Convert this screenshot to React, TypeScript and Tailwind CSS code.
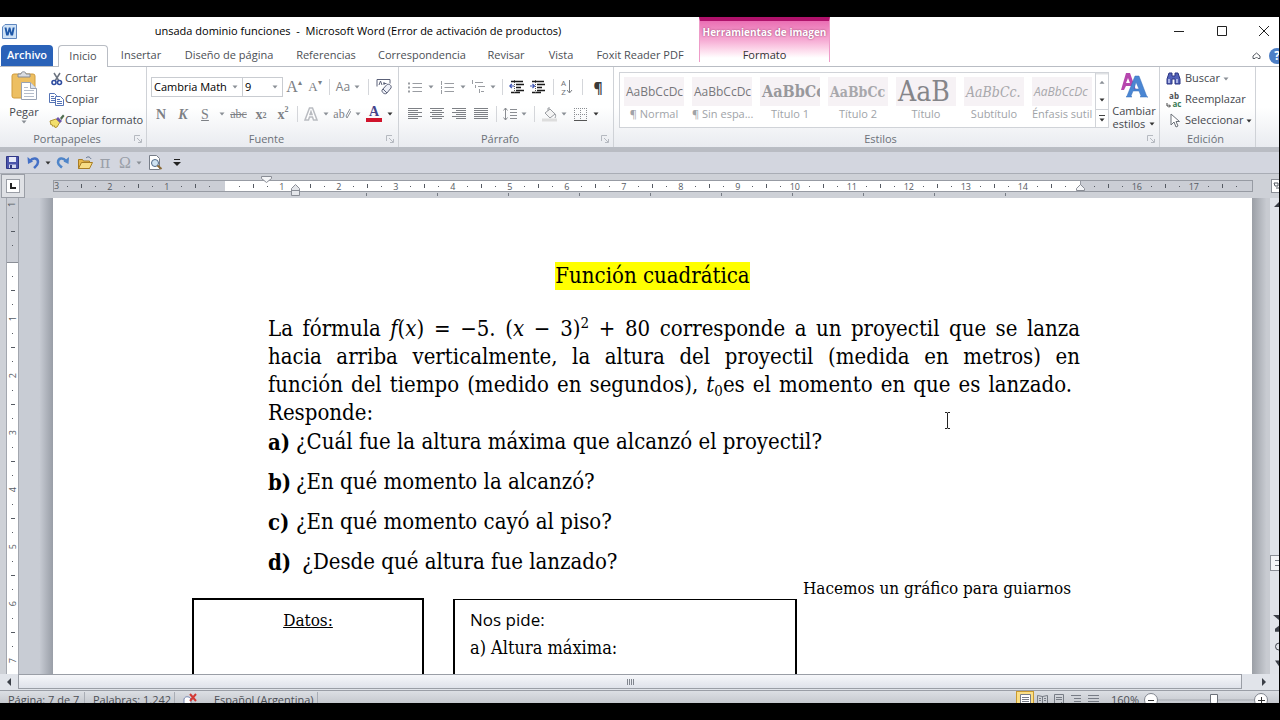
import type { ReactNode } from 'react';

const UI = "font-['Open_Sans','Noto_Sans',sans-serif]";
const SERIF = "font-['Liberation_Serif',serif]";

function Caret({ dark = false }: { dark?: boolean }) {
  return (
    <svg width="6" height="4" viewBox="0 0 6 4" className={dark ? 'fill-[#333333]' : 'fill-[#8a8f96]'}>
      <path d="M0.5 0.5h5L3 3.5z" />
    </svg>
  );
}

function Tool({ label, className, children }: { label: string; className: string; children: ReactNode }) {
  return (
    <button aria-label={label} className={`flex h-6 shrink-0 items-center justify-center ${className}`}>
      {children}
    </button>
  );
}

function Sep({ className }: { className: string }) {
  return (
    <span className={`flex h-6 shrink-0 items-center justify-center ${className}`}>
      <span className="h-4 w-px bg-[#d4d6da]" />
    </span>
  );
}

function Group({ title, className, launcher = true, children }: { title: string; className: string; launcher?: boolean; children: ReactNode }) {
  return (
    <section className={`flex flex-col border-r border-[#cfd2d7] ${className}`}>
      <div className="flex-1">{children}</div>
      <div className="flex h-4 items-center pr-1 text-[11px] text-[#6b7078]">
        <h2 className="flex-1 text-center">{title}</h2>
        {launcher && (
          <button aria-label={`Opciones de ${title}`} className="w-2">
            <svg width="8" height="8" viewBox="0 0 8 8" fill="none" stroke="#b5b9c0">
              <path d="M0.5 6V0.5H6M3 3l4 4M7.5 4v3.5H4" />
            </svg>
          </button>
        )}
      </div>
    </section>
  );
}

function Lines({ rows }: { rows: [number, number][] }) {
  return (
    <svg width="14" height="12" viewBox="0 0 14 12" stroke="#7d8085" strokeWidth="1">
      {rows.map(([x1, x2], i) => (
        <path key={i} d={`M${x1} ${i * 2 + 0.5}H${x2}`} />
      ))}
    </svg>
  );
}

function IndentIcon({ flip = false }: { flip?: boolean }) {
  return (
    <svg width="16" height="14" viewBox="0 0 16 14" fill="none">
      <path d="M2 1.5h12M7 4.5h8M7 7.5h5M7 10.5h8M2 12.5h9" stroke="#1b1b1b" strokeWidth="1.4" />
      <path d="M5.5 0v14" stroke="#555555" strokeDasharray="1 1" />
      <path d={flip ? 'M0 6h4M2.5 4l2 2-2 2' : 'M5 6H1M2.8 4l-2 2 2 2'} stroke="#3d55b5" strokeWidth="1.2" />
    </svg>
  );
}

function WordLogo() {
  return (
    <svg width="15" height="15" viewBox="0 0 15 15">
      <path d="M3 .5h11.500v14H.5V3z" fill="#cfe2f6" stroke="#5f87bf" />
      <path d="M2.500 3.500h2l1 5 1.300-5h1.600l1.300 5 1-5h2L11 11.500H8.700L7.600 7.500l-1.100 4H4.200z" fill="#1f58a8" />
    </svg>
  );
}

function PasteIcon() {
  return (
    <svg width="27" height="29" viewBox="0 0 27 29">
      <rect x="1" y="3" width="23" height="24" rx="2" fill="#edbf62" stroke="#d19c3c" />
      <path d="M7 6V3h3c0-3 5-3 5 0h4v3z" fill="#d9dce1" stroke="#858a92" />
      <path d="M10.500 11.500h9l6 6v11h-15z" fill="#fff" stroke="#98a2b4" />
      <path d="M19.500 11.500v6h6" fill="#dbe2ee" stroke="#98a2b4" />
      <path d="M13 16.500h4M13 19.500h10M13 22.500h10M13 25.500h10" stroke="#b5bdcb" />
    </svg>
  );
}

function CutIcon() {
  return (
    <svg width="14" height="14" viewBox="0 0 14 14" fill="none">
      <path d="M4 1l5 8M10 1L5 9" stroke="#6c7480" strokeWidth="1.500" />
      <circle cx="4" cy="10.500" r="2" stroke="#2f4da0" strokeWidth="1.600" />
      <circle cx="9.500" cy="10.500" r="2" stroke="#2f4da0" strokeWidth="1.600" />
    </svg>
  );
}

function CopyIcon() {
  return (
    <svg width="15" height="13" viewBox="0 0 15 13" fill="#fff" stroke="#5573b5">
      <path d="M.5.5h5l2 2v7h-7z" />
      <path d="M2 3.500h3M2 5.500h4M2 7.500h4" />
      <path d="M6.500 3.500h5l3 3v6h-8z" />
      <path d="M8 6.500h3M8 8.500h5M8 10.500h5" />
    </svg>
  );
}

function BrushIcon() {
  return (
    <svg width="16" height="14" viewBox="0 0 16 14">
      <path d="M1 7l6-2 4 3-3 5-2 .5-1-2-1 1-1-2-1 .5z" fill="#f3df6b" stroke="#b39531" />
      <path d="M7 5l2-2 4 4-2 2z" fill="#6b55a8" />
      <path d="M11 4l3-3.500 1.500 1.500L12.500 6z" fill="#4d6a4d" />
    </svg>
  );
}

function BinocularsIcon() {
  return (
    <svg width="15" height="13" viewBox="0 0 15 13">
      <path d="M3 1h3v3h3V1h3l2 6v5H9V7H6v5H1V7z" fill="#5261b8" stroke="#2c3683" />
      <path d="M3 7v4M11 7v4" stroke="#c5cdf2" strokeWidth="1.500" />
    </svg>
  );
}

function ReplaceIcon() {
  return (
    <span className="relative flex w-4 flex-col text-[8px] leading-[8px] font-bold">
      <span className="text-[#4c4f55]">ab</span>
      <span className="pl-1.5 text-[#3a7d57]">ac</span>
      <svg width="5" height="5" viewBox="0 0 5 5" className="absolute bottom-0 left-0" fill="none" stroke="#444">
        <path d="M1 0v3h3M3 1.500L4.500 3 3 4.500" />
      </svg>
    </span>
  );
}

function SelectIcon() {
  return (
    <svg width="11" height="15" viewBox="0 0 11 15">
      <path d="M2 1v11l3-3 2 5 2-1-2-4.500h3.500z" fill="#fff" stroke="#6b7078" />
    </svg>
  );
}

function QatIcon({ name }: { name: 'save' | 'undo' | 'redo' | 'open' | 'preview' }) {
  return (
    <svg width="16" height="15" viewBox="0 0 16 15" fill="none">
      {name === 'save' && (
        <>
          <path d="M1.500 1.500h12v12h-12z" fill="#4b54ab" stroke="#2f3787" />
          <path d="M4 2h7v5H4z" fill="#e6e9f8" />
          <path d="M4 9.500h7V13H4z" fill="#d2d6ee" />
          <path d="M5 10h2v3H5z" fill="#30387e" />
        </>
      )}
      {name === 'undo' && (
        <>
          <path d="M4 6c3-4 8-3 8 1 0 3-2 4-4 6" stroke="#4470c6" strokeWidth="2.500" />
          <path d="M1.500 2l.5 7 5-2.500z" fill="#4470c6" />
        </>
      )}
      {name === 'redo' && (
        <>
          <path d="M11 6C8 2 3 3 3 7.500c0 2.500 2 3.500 4 5" stroke="#4f85c9" strokeWidth="2.500" />
          <path d="M14 2l-.5 7-5-2.500z" fill="#4f85c9" />
        </>
      )}
      {name === 'open' && (
        <>
          <path d="M1.500 13.500v-9h4l1 1.500h6v7.500z" fill="#e9b84a" stroke="#a97e25" />
          <path d="M1.500 13.500l3-6h11l-3 6z" fill="#f8dd85" stroke="#a97e25" />
          <path d="M9 3c2-2 4-1 5 1" stroke="#5e6f8a" />
        </>
      )}
      {name === 'preview' && (
        <>
          <path d="M2.500.5h7l3 3v11h-10z" fill="#fff" stroke="#777d88" />
          <circle cx="8" cy="8" r="3.500" fill="#cfe3f2" stroke="#4f6785" />
          <path d="M10.500 10.500l4 3.500" stroke="#8a6a36" strokeWidth="2" />
        </>
      )}
    </svg>
  );
}

const styles = [
  { name: '¶ Normal', sample: 'AaBbCcDc', look: "text-[12px] text-[#77777b] font-['Open_Sans',sans-serif]" },
  { name: '¶ Sin espa...', sample: 'AaBbCcDc', look: "text-[12px] text-[#77777b] font-['Open_Sans',sans-serif]" },
  { name: 'Título 1', sample: 'AaBbCc', look: "text-[16px] font-bold text-[#98989c] font-['DejaVu_Serif_Condensed','DejaVu_Serif',serif]" },
  { name: 'Título 2', sample: 'AaBbCc', look: "text-[14px] font-bold text-[#a8a8ac] font-['DejaVu_Serif_Condensed','DejaVu_Serif',serif]" },
  { name: 'Título', sample: 'AaB', look: "text-[28px] text-[#858589] font-['DejaVu_Serif_Condensed','DejaVu_Serif',serif]" },
  { name: 'Subtítulo', sample: 'AaBbCc.', look: "text-[14px] italic text-[#a8a8ac] font-['DejaVu_Serif_Condensed','DejaVu_Serif',serif]" },
  { name: 'Énfasis sutil', sample: 'AaBbCcDc', look: "text-[12px] italic text-[#a8a8ac] font-['Open_Sans',sans-serif]" },
];

const tabs = [
  { name: 'Insertar', width: 'w-[66px]' },
  { name: 'Diseño de página', width: 'w-[110px]' },
  { name: 'Referencias', width: 'w-[84px]' },
  { name: 'Correspondencia', width: 'w-[108px]' },
  { name: 'Revisar', width: 'w-[60px]' },
  { name: 'Vista', width: 'w-[50px]' },
  { name: 'Foxit Reader PDF', width: 'w-[108px]' },
];

function Header() {
  return (
    <header className="flex shrink-0 bg-white text-[11px] text-[#4c4f55]">
      <div className="flex w-[699px] shrink-0 flex-col">
        <div className="flex h-7 items-center pl-0.5 text-black">
          <WordLogo />
          <h1 className="flex-1 text-center whitespace-pre">unsada dominio funciones  -  Microsoft Word (Error de activación de productos)</h1>
        </div>
        <nav className="flex h-[21px] items-stretch pl-px">
          <button className="w-[52px] rounded-t-sm bg-[#2a62b8] font-semibold text-white">Archivo</button>
          <button className="z-10 -mb-px ml-[5px] w-[50px] rounded-t-sm border border-b-0 border-[#b9bdc4] bg-white">Inicio</button>
          {tabs.map((tab) => (
            <button key={tab.name} className={`${tab.width} whitespace-nowrap`}>{tab.name}</button>
          ))}
        </nav>
      </div>
      <div className="flex h-[45px] w-[131px] shrink-0 flex-col border-x border-[#ee9cc9] border-t-4 border-t-[#b0126b] bg-linear-to-b from-[#ea6fb4] via-[#f5a8d2] via-45% to-white to-90% text-center">
        <span className="h-[27px] pt-[3px] text-[10px] leading-4 font-bold whitespace-nowrap text-white [text-shadow:0_0_2px_#8a3565]">Herramientas de imagen</span>
        <button className="leading-[14px] text-[#333333]">Formato</button>
      </div>
      <div className="flex min-w-0 flex-1 flex-col overflow-hidden">
        <div className="flex h-7 items-center justify-end">
          <button aria-label="Minimizar" className="flex w-[42px] justify-center">
            <svg width="10" height="10" stroke="#222222"><path d="M0 5.500h10" /></svg>
          </button>
          <button aria-label="Maximizar" className="flex w-[44px] justify-center">
            <svg width="10" height="10" fill="none" stroke="#222222"><path d="M.5.5h9v9h-9z" /></svg>
          </button>
          <button aria-label="Cerrar" className="mr-1 flex w-[31px] justify-end pr-1.5">
            <svg width="10" height="10" stroke="#222222"><path d="M0 0l10 10M10 0L0 10" /></svg>
          </button>
        </div>
        <div className="-mr-1.5 flex h-[21px] items-center justify-end gap-2">
          <button aria-label="Minimizar la cinta">
            <svg width="9" height="8" viewBox="0 0 9 8" fill="none" stroke="#555a62"><path d="M1 4l3.500-3L8 4v2.500H6L4.500 5 3 6.500H1z" /></svg>
          </button>
          <button aria-label="Ayuda" className="size-4 rounded-full bg-[#4d7fc6] text-[12px] leading-4 font-bold text-white">?</button>
        </div>
      </div>
    </header>
  );
}

function Clipboard() {
  return (
    <div className="flex pl-1 text-[11px] text-[#44474d]">
      <button className="flex w-10 flex-col items-center pt-1 leading-4">
        <PasteIcon />
        <span className="mt-1">Pegar</span>
        <Caret />
      </button>
      <div className="flex flex-col pt-px pl-1">
        <button className="flex h-[21px] items-center"><span className="flex w-[17px] justify-center"><CutIcon /></span>Cortar</button>
        <button className="flex h-[21px] items-center"><span className="flex w-[17px] justify-center"><CopyIcon /></span>Copiar</button>
        <button className="flex h-[21px] items-center whitespace-nowrap"><span className="flex w-[17px] justify-center"><BrushIcon /></span>Copiar formato</button>
      </div>
    </div>
  );
}

function Combo({ label, value, className }: { label: string; value: string; className: string }) {
  return (
    <span className={`relative block h-5 border border-[#c9ccd1] bg-white ${className}`}>
      <select aria-label={label} className="block h-[18px] w-full appearance-none pl-0.5 text-[11px] leading-[18px] text-black outline-none">
        <option>{value}</option>
      </select>
      <span className="pointer-events-none absolute top-[7px] right-1 flex"><Caret /></span>
    </span>
  );
}

function FontGroup() {
  return (
    <div className="flex flex-col gap-[3px] pt-2 pl-1 text-[#7d8085]">
      <div className="flex items-center">
        <Combo label="Fuente" value="Cambria Math" className="w-[92px]" />
        <Combo label="Tamaño" value="9" className="-ml-px w-[41px]" />
        <Tool label="Agrandar fuente" className={`${SERIF} w-[22px] text-[16px]`}>A<sup className="text-[8px]">▴</sup></Tool>
        <Tool label="Encoger fuente" className={`${SERIF} w-5 text-[13px]`}>A<sup className="text-[8px]">▾</sup></Tool>
        <Sep className="w-2" />
        <Tool label="Cambiar mayúsculas" className="w-5 text-[12px]">Aa</Tool>
        <Tool label="Más mayúsculas" className="w-2"><Caret /></Tool>
        <Sep className="w-3.5" />
        <Tool label="Borrar formato" className="w-[18px]">
          <svg width="17" height="16" viewBox="0 0 17 16" fill="none" stroke="#5b6178">
            <path d="M1 7.500V.5h13v4M3 6l1.500-4L6 6M7.500 4.500h3M8 6V3" />
            <path d="M6 11l5-5.500c2-1 5 1 4 3.500l-4.500 5.500c-2 1-5-1-4.500-3.500zM7 10l4 4" fill="#eef0f8" />
          </svg>
        </Tool>
      </div>
      <div className={`${SERIF} -ml-px flex items-center text-[14px]`}>
        <Tool label="Negrita" className="w-[22px] font-bold">N</Tool>
        <Tool label="Cursiva" className="w-[22px] font-bold italic">K</Tool>
        <Tool label="Subrayado" className="w-[22px] underline">S</Tool>
        <Tool label="Más subrayados" className="w-[11px]"><Caret /></Tool>
        <Tool label="Tachado" className="w-[23px] text-[12px] line-through">abc</Tool>
        <Tool label="Subíndice" className="w-[22px] font-bold">x<sub className="text-[8px]">2</sub></Tool>
        <Tool label="Superíndice" className="w-[22px] font-bold">x<sup className="text-[8px]">2</sup></Tool>
        <Sep className="w-1.5" />
        <Tool label="Efectos de texto" className="w-[22px]">
          <svg width="14" height="14" viewBox="0 0 14 14" fill="#fff" stroke="#b9bcc1" strokeWidth="1.500">
            <path d="M5.500 1h3l4.500 12H9.500L8.500 10h-3l-1 3H1zM6 7.500h2L7 4.500z" />
          </svg>
        </Tool>
        <Tool label="Más efectos" className="w-2"><Caret /></Tool>
        <Tool label="Resaltado" className="w-6 text-[12px]">
          ab
          <svg width="6" height="10" viewBox="0 0 6 10" fill="none" stroke="#8a8f96"><path d="M5 0L1 7l1 2 4-7" /></svg>
        </Tool>
        <Tool label="Más resaltados" className="w-2"><Caret /></Tool>
        <Tool label="Color de fuente" className="w-6">
          <span className="flex w-4 flex-col items-center border-b-4 border-[#d0142c] text-[14px] leading-3 font-bold text-[#45458c]">A</span>
        </Tool>
        <Tool label="Más colores" className="w-2"><Caret dark /></Tool>
      </div>
    </div>
  );
}

function ListIcon({ numbered = false }: { numbered?: boolean }) {
  return (
    <svg width="14" height="13" viewBox="0 0 14 13" stroke="#9a9da2">
      <path d="M4.500 2.500H14M4.500 6.500H14M4.500 10.500H14" />
      <path d={numbered ? 'M1.500 0v4M1.500 5v3M1.500 9v4' : 'M0 2.500h2M0 6.500h2M0 10.500h2'} strokeWidth={numbered ? 1 : 2} />
    </svg>
  );
}

function ParagraphGroup() {
  return (
    <div className="flex flex-col gap-[3px] pt-2 pl-1 text-[#6d7076]">
      <div className="flex items-center">
        <Tool label="Viñetas" className="w-6"><ListIcon /></Tool>
        <Tool label="Más viñetas" className="w-2"><Caret /></Tool>
        <Tool label="Numeración" className="w-6"><ListIcon numbered /></Tool>
        <Tool label="Más numeración" className="w-2"><Caret /></Tool>
        <Tool label="Lista multinivel" className="w-[22px]">
          <svg width="15" height="14" viewBox="0 0 15 14" stroke="#9a9da2">
            <path d="M1.500 0v4M4 2.500h8M4.500 5v3M7 6.500h7M8.500 9v4M10 11.500h3" />
          </svg>
        </Tool>
        <Tool label="Más listas" className="w-2"><Caret /></Tool>
        <Sep className="w-2.5" />
        <Tool label="Disminuir sangría" className="w-5"><IndentIcon /></Tool>
        <Tool label="Aumentar sangría" className="w-[22px]"><IndentIcon flip /></Tool>
        <Sep className="w-2" />
        <Tool label="Ordenar" className="w-5">
          <span className="flex flex-col text-[8px] leading-[9px]"><span>A</span><span>Z</span></span>
          <svg width="7" height="14" viewBox="0 0 7 14" fill="none" stroke="#7d8085"><path d="M3.500 0v13M1 10l2.500 3L6 10" /></svg>
        </Tool>
        <Sep className="w-2.5" />
        <Tool label="Mostrar todo" className="w-[22px] text-[14px] font-bold text-[#3a3a3a]">¶</Tool>
      </div>
      <div className="flex items-center pl-px">
        <Tool label="Alinear a la izquierda" className="w-[22px]"><Lines rows={[[0, 14], [0, 10], [0, 14], [0, 10], [0, 14], [0, 10]]} /></Tool>
        <Tool label="Centrar" className="w-[22px]"><Lines rows={[[0, 14], [2, 12], [0, 14], [2, 12], [0, 14], [2, 12]]} /></Tool>
        <Tool label="Alinear a la derecha" className="w-[22px]"><Lines rows={[[0, 14], [4, 14], [0, 14], [4, 14], [0, 14], [4, 14]]} /></Tool>
        <Tool label="Justificar" className="w-[22px]"><Lines rows={[[0, 14], [0, 14], [0, 14], [0, 14], [0, 14], [0, 14]]} /></Tool>
        <Sep className="w-2" />
        <Tool label="Interlineado" className="w-5">
          <svg width="14" height="14" viewBox="0 0 14 14" fill="none" stroke="#8a8d92">
            <path d="M2.500 1v12M.5 3.500l2-2.500 2 2.500M.5 10.500l2 2.500 2-2.500M7 2.500h7M7 5.500h7M7 8.500h7M7 11.500h7" />
          </svg>
        </Tool>
        <Tool label="Más interlineado" className="w-2"><Caret /></Tool>
        <Sep className="w-3" />
        <Tool label="Sombreado" className="w-5">
          <svg width="16" height="15" viewBox="0 0 16 15" fill="#f4f4f4" stroke="#9a9da2">
            <path d="M3 6l5-4 5 5-5 4zM6 4V1h2M12 6c2 1 2 3 1 5" />
            <path d="M0 13h15" stroke="#dddddd" strokeWidth="3" />
          </svg>
        </Tool>
        <Tool label="Más sombreado" className="w-2"><Caret /></Tool>
        <Tool label="Bordes" className="w-6">
          <svg width="13" height="13" viewBox="0 0 13 13" fill="none" stroke="#8a8d92">
            <path d="M.5 0v12M6.500 0v12M12.500 0v12M0 .5h13M0 6.500h13" strokeDasharray="1 1" />
            <path d="M0 12.500h13" stroke="#555555" />
          </svg>
        </Tool>
        <Tool label="Más bordes" className="w-2"><Caret dark /></Tool>
      </div>
    </div>
  );
}

function StylesGroup() {
  return (
    <div className="flex pt-[5px] pl-[5px] text-[11px]">
      <div className="flex h-14 min-w-0 flex-1 border border-[#d0d3d8] bg-white">
        <div className="flex min-w-0 flex-1 gap-2 overflow-hidden pt-1 pl-1">
          {styles.map((style) => (
            <button key={style.name} className="flex w-[60px] shrink-0 flex-col">
              <span className={`flex h-[29px] w-[60px] items-center overflow-hidden bg-[#f6f2f5] pl-0.5 leading-none ${style.look}`}>{style.sample}</span>
              <span className="w-full text-center leading-4 whitespace-nowrap text-[#a0a3a8]">{style.name}</span>
            </button>
          ))}
        </div>
        <div className="flex w-[13px] flex-col divide-y divide-[#d0d3d8] border-l border-[#d0d3d8]">
          <button aria-label="Fila anterior" className="flex flex-1 rotate-180 items-center justify-center"><Caret /></button>
          <button aria-label="Fila siguiente" className="flex flex-1 items-center justify-center"><Caret dark /></button>
          <button aria-label="Más estilos" className="flex flex-1 flex-col items-center justify-center gap-0.5"><span className="h-px w-1.5 bg-[#444444]" /><Caret dark /></button>
        </div>
      </div>
      <button className="flex w-[50px] shrink-0 flex-col items-center text-[#44474d]">
        <svg width="28" height="28" viewBox="0 0 28 28">
          <path d="M6 1h4l6 17h-4l-1-4H6l-2 4H1zM8 6l-2 5h4z" fill="#b646ae" />
          <path d="M15 4h4l8 21h3-10l1-1-2-5h-6l-2 5 1 1H6l1-1zM16 10l-2 7h5z" fill="#4a86d3" stroke="#376fb8" strokeWidth=".5" />
        </svg>
        <span className="mt-1 leading-[13px]">Cambiar</span>
        <span className="flex items-center gap-1 leading-[13px]">estilos <Caret dark /></span>
      </button>
    </div>
  );
}

function EditGroup() {
  return (
    <div className="flex flex-col pt-px pl-[6px] text-[11px] text-[#44474d]">
      <button className="flex h-[21px] items-center gap-[3px]"><span className="w-4"><BinocularsIcon /></span>Buscar <Caret /></button>
      <button className="flex h-[21px] items-center gap-[3px]"><ReplaceIcon />Reemplazar</button>
      <button className="flex h-[21px] items-center gap-[3px]"><span className="flex w-4 justify-center"><SelectIcon /></span>Seleccionar <Caret dark /></button>
    </div>
  );
}

function QuickAccess() {
  return (
    <div className="flex h-[22px] shrink-0 items-center border-b border-[#a9adb5] bg-[#d3d6df] pl-[3px] text-[#9a9fa8]">
      <Tool label="Guardar" className="w-5"><QatIcon name="save" /></Tool>
      <Tool label="Deshacer" className="w-[22px]"><QatIcon name="undo" /></Tool>
      <Tool label="Lista de deshacer" className="w-1.5"><Caret dark /></Tool>
      <Tool label="Rehacer" className="w-6"><QatIcon name="redo" /></Tool>
      <Tool label="Abrir" className="w-5"><QatIcon name="open" /></Tool>
      <Tool label="Ecuación" className="w-5 font-['DejaVu_Serif',serif] text-[16px]">π</Tool>
      <Tool label="Símbolo" className={`${SERIF} w-5 text-[16px]`}>Ω</Tool>
      <Tool label="Más símbolos" className="w-2"><Caret /></Tool>
      <Tool label="Vista previa" className="w-6"><QatIcon name="preview" /></Tool>
      <Tool label="Personalizar" className="w-5">
        <svg width="8" height="8" viewBox="0 0 8 8" fill="#222222"><path d="M1 0h6v1H1zM0 3h8L4 7z" /></svg>
      </Tool>
    </div>
  );
}

/* One centimetre of ruler: three quarter marks and then the number */
function Centimetre({ value, vertical = false }: { value: string; vertical?: boolean }) {
  const cell = 'flex items-center justify-center';
  return (
    <div className={vertical ? 'grid h-[57px] shrink-0 grid-rows-4' : 'grid w-[57px] shrink-0 grid-cols-4'}>
      <span className={cell}><i className="size-px bg-[#555a62]" /></span>
      <span className={cell}><i className={vertical ? 'h-px w-1 bg-[#555a62]' : 'h-1 w-px bg-[#555a62]'} /></span>
      <span className={cell}><i className="size-px bg-[#555a62]" /></span>
      <span className={`${cell} text-[9px] leading-none text-[#555a62] ${vertical ? 'rotate-180 [writing-mode:vertical-rl]' : ''}`}>{value}</span>
    </div>
  );
}

function HorizontalRuler() {
  const inner = Array.from({ length: 15 }, (_, i) => (i < 14 ? String(i + 1) : ''));
  const stops = Array.from({ length: 10 }, (_, i) => i);
  return (
    <div className="flex h-6 shrink-0 bg-[#ced1d7]">
      <div className="ml-px flex w-6 shrink-0 items-center justify-center border border-[#9a9ea6] bg-[#dfe1e5]">
        <button aria-label="Tabulación" className="flex size-3.5 items-center justify-center border border-[#9a9ea6] bg-white">
          <svg width="6" height="6" fill="none" stroke="#222222" strokeWidth="2"><path d="M1 0v5h5" /></svg>
        </button>
      </div>
      <div className="relative mt-1.5 ml-7 flex min-w-0 flex-1 flex-col">
        <div className="flex h-[12px] border border-[#979ba3] bg-[#cbced5]">
          <div className="flex w-[171px] shrink-0 overflow-hidden">
            <span className="w-[6px] shrink-0 text-[9px] leading-[10px] text-[#555a62]">3</span>
            <Centimetre value="2" />
            <Centimetre value="1" />
            <Centimetre value="" />
          </div>
          <div className="flex w-[855px] shrink-0 overflow-hidden bg-white pl-[7px]">
            {inner.map((n, i) => <Centimetre key={i} value={n} />)}
          </div>
          <div className="flex min-w-0 flex-1 overflow-hidden border-l border-[#979ba3] pl-1.5">
            <Centimetre value="16" />
            <Centimetre value="17" />
            <Centimetre value="" />
          </div>
        </div>
        <div className="ml-[243px] flex h-1 pt-px">
          {stops.map((i) => <i key={i} className="h-[3px] w-[71px] shrink-0 border-r border-[#777c85]" />)}
        </div>
        <svg width="11" height="7" viewBox="0 0 11 7" className="absolute -top-1 left-[208px]" fill="#f4f5f7" stroke="#8a8e96"><path d="M.5.500h10v2l-5 4-5-4z" /></svg>
        <svg width="9" height="12" viewBox="0 0 9 12" className="absolute top-1 left-[238px]" fill="#e4e6ea" stroke="#8a8e96"><path d="M.5 4.500l4-4 4 4v7h-8zM.5 6.500h8" /></svg>
        <svg width="9" height="7" viewBox="0 0 9 7" className="absolute top-1 left-[1023px]" fill="#f4f5f7" stroke="#8a8e96"><path d="M.5 4.500l4-4 4 4v2h-8z" /></svg>
      </div>
      <div className="flex w-[26px] shrink-0 items-center justify-end">
        <button aria-label="Regla" className="flex h-3.5 w-2 items-center justify-center border border-r-0 border-[#8a8e96] bg-white">
          <svg width="6" height="8" fill="none" stroke="#555a62"><path d="M1 1h4v3H2zM3 6h3" /></svg>
        </button>
      </div>
    </div>
  );
}

function VerticalRuler() {
  return (
    <div className="ml-1.5 flex w-[13px] shrink-0 flex-col overflow-hidden border-x border-[#a3a7af] bg-white">
      <div className="h-[65px] shrink-0 border-b border-[#8a8e96] bg-[#cbced5]">
        <span className="flex h-3 rotate-180 items-center justify-center text-[9px] leading-none text-[#555a62] [writing-mode:vertical-rl]">1</span>
        <Centimetre value="" vertical />
      </div>
      <div className="mt-1.5 flex flex-col">
        {['1', '2', '3', '4', '5', '6', '7'].map((n) => <Centimetre key={n} value={n} vertical />)}
      </div>
    </div>
  );
}

function Formula() {
  return (
    <span className="inline-flex w-[260px] justify-between">
      <span><i>f</i>(<i>x</i>)</span>
      <span>=</span>
      <span>−5.</span>
      <span>(<i>x</i></span>
      <span>−</span>
      <span>3)<sup className="relative -top-2 align-baseline text-[15px] leading-none">2</sup></span>
      <span>+</span>
      <span>80</span>
    </span>
  );
}

const questions = [
  { letter: 'b)', text: '¿En qué momento la alcanzó?' },
  { letter: 'c)', text: '¿En qué momento cayó al piso?' },
  { letter: 'd)', text: ' ¿Desde qué altura fue lanzado?' },
];

function Page() {
  return (
    <main className="min-w-0 flex-1 overflow-hidden bg-white font-['DejaVu_Serif_Condensed','DejaVu_Serif',serif] text-[22px] leading-7 text-black">
      <h2 className="pt-16 text-center"><mark className="inline-block bg-[#ffff00]">Función cuadrática</mark></h2>
      <div className="mt-[25px] mr-[172px] ml-[215px]">
        <p>
          <span className="block h-7 whitespace-nowrap [text-align-last:justify]">La fórmula <Formula /> corresponde a un proyectil que se lanza</span>
          <span className="block h-7 whitespace-nowrap [text-align-last:justify]">hacia arriba verticalmente, la altura del proyectil (medida en metros) en</span>
          <span className="mr-2 block h-7 whitespace-nowrap [text-align-last:justify]">
            función del tiempo (medido en segundos), <i>t</i><sub className="relative top-1 align-baseline text-[15px] leading-none">0</sub>es el momento en que es lanzado.
          </span>
          <span className="block h-7">Responde:</span>
        </p>
        <ol>
          <li className="flex h-[35px] pt-px whitespace-nowrap"><b className="w-7">a)</b>¿Cuál fue la altura máxima que alcanzó el proyectil?</li>
          {questions.map((q) => (
            <li key={q.letter} className="flex h-10 items-center whitespace-pre"><b className="w-7">{q.letter}</b>{q.text}</li>
          ))}
        </ol>
      </div>
      <div className="flex items-start pl-[139px] text-[17px] leading-7">
        <div className="mt-4 h-28 w-[232px] shrink-0 border-2 border-black pt-1.5 text-center underline">Datos:</div>
        <div className="mt-[17px] ml-[29px] h-28 w-[344px] shrink-0 border-2 border-t border-black px-[15px] pt-1.5">
          <p className="font-['Open_Sans',sans-serif]">Nos pide:</p>
          <p className="text-[18px]">a) Altura máxima:</p>
        </div>
        <p className="-mt-2 ml-1.5 whitespace-nowrap">Hacemos un gráfico para guiarnos</p>
      </div>
    </main>
  );
}

function Workspace() {
  return (
    <div className="relative flex min-h-0 flex-1 bg-[#ced1d7]">
      <VerticalRuler />
      <div className="w-[34px] shrink-0 bg-linear-to-r from-[#c8ccd4] from-60% to-[#999ea7]" />
      <Page />
      <div className="w-[18px] shrink-0 bg-linear-to-r from-[#9b9fa6] to-[#c8cbd1] to-80%" />
      <div className="flex w-[9px] shrink-0 flex-col items-end bg-[#e0e3e9]">
        <svg width="5" height="5" viewBox="0 0 5 5" className="mt-1"><path d="M5 0v5H0z" fill="#3c4048" /></svg>
        <div className="mt-[348px] h-4 w-full border border-r-0 border-[#8a8e96] bg-[#f4f5f7] pt-1 pl-1">
          <i className="block h-1.5 border-y border-[#777c85]" />
        </div>
        <svg width="6" height="60" viewBox="0 0 6 60" className="mt-11" fill="#3c4048">
          <path d="M0 0h6v5zM2 14l4-3v6H2zM2 46h4v6z" />
          <circle cx="6" cy="32" r="3.500" fill="none" stroke="#3c4048" />
        </svg>
      </div>
      <svg width="7" height="17" viewBox="0 0 7 17" className="absolute top-[214px] left-[944px]" fill="none" stroke="#222222"><path d="M1 .5h2l.5.5.5-.5h2M3.500 1v15M1 16.500h2l.5-.5.5.5h2" /></svg>
    </div>
  );
}

function HorizontalScroll() {
  return (
    <div className="flex h-4 shrink-0 items-stretch bg-[#e1e4ea] pr-[9px]">
      <button aria-label="Desplazar a la izquierda" className="flex w-[18px] items-center justify-center">
        <svg width="4" height="8"><path d="M4 0v8L0 4z" fill="#3c4048" /></svg>
      </button>
      <div className="mb-px flex flex-1 items-center justify-center gap-px border border-[#9a9ea6] bg-linear-to-b from-[#f6f7fa] to-[#dfe2ea]">
        {[0, 1, 2, 3].map((i) => <i key={i} className="h-1.5 w-px bg-[#80858e]" />)}
      </div>
      <button aria-label="Desplazar a la derecha" className="flex w-[28px] items-center justify-end pr-1">
        <svg width="4" height="8"><path d="M0 0v8l4-4z" fill="#3c4048" /></svg>
      </button>
    </div>
  );
}

const views = ['Lectura', 'Diseño web', 'Esquema', 'Borrador'];

function StatusBar() {
  return (
    <footer className="h-[13px] shrink-0 overflow-hidden border-t border-[#9a9ea6] bg-linear-to-b from-[#dcdfe4] to-[#c6c9cf] text-[11px] text-[#4c4f55]">
      <div className="flex h-[18px] items-center">
        <span className="w-[85px] border-r border-[#a9adb5] pl-2">Página: 7 de 7</span>
        <span className="w-[90px] border-r border-[#a9adb5] pl-2">Palabras: 1.242</span>
        <button aria-label="Revisión" className="ml-2 flex h-full w-[31px] items-start pt-0.5">
          <svg width="16" height="13" viewBox="0 0 16 13" fill="none">
            <path d="M1 6c1-3 5-3 7 0v6c-2-2-5-2-7 0z" fill="#fff" stroke="#7484b0" />
            <path d="M7 1l6 7M13 1L7 8" stroke="#d43a35" strokeWidth="2" />
          </svg>
        </button>
        <span className="w-[104px] border-r border-[#a9adb5] whitespace-nowrap">Español (Argentina)</span>
        <div className="flex h-full flex-1 items-center justify-end">
          <button aria-label="Diseño de impresión" className="flex h-full w-[18px] items-center justify-center border border-[#c99a2f] bg-[#fbdf86]">
            <svg width="11" height="12" fill="#fff" stroke="#777c85"><path d="M.5.500h10v11H.500zM2 3.500h7M2 5.500h7M2 7.500h7" /></svg>
          </button>
          {views.map((view) => (
            <button key={view} aria-label={view} className="flex w-[17px] items-center justify-center">
              <svg width="11" height="12" fill="none" stroke="#777c85">
                {view === 'Lectura' && <path d="M.5 1.500l5 1 5-1v9l-5 1-5-1zM5.500 2v9M2 4.500h2M7 4.500h2M2 6.500h2M7 6.500h2" />}
                {view === 'Diseño web' && <path d="M.5.500h9v9h-9zM2 3.500h6M2 5.500h6M7 8l3 3" />}
                {view === 'Esquema' && <path d="M0 1.500h10M3 4.500h7M3 7.500h7M5 10.500h5" />}
                {view === 'Borrador' && <path d="M0 1.500h11M0 4.500h11M0 7.500h11M0 10.500h11" />}
              </svg>
            </button>
          ))}
          <label htmlFor="zoom" className="w-[42px] pl-1 text-center">160%</label>
          <button aria-label="Alejar" className="flex size-3.5 items-center justify-center rounded-full border border-[#80858e] bg-white">
            <i className="h-px w-1.5 bg-[#333333]" />
          </button>
          <input
            id="zoom"
            type="range"
            min={10}
            max={310}
            defaultValue={188}
            className="h-3.5 w-[96px] appearance-none bg-linear-to-b from-transparent from-45% via-[#8a8e96] via-50% to-transparent to-55% [&::-webkit-slider-thumb]:h-3 [&::-webkit-slider-thumb]:w-2 [&::-webkit-slider-thumb]:appearance-none [&::-webkit-slider-thumb]:rounded-b-sm [&::-webkit-slider-thumb]:border [&::-webkit-slider-thumb]:border-[#6b7078] [&::-webkit-slider-thumb]:bg-white"
          />
          <button aria-label="Acercar" className="mr-[11px] flex size-3.5 items-center justify-center rounded-full border border-[#80858e] bg-white">
            <svg width="7" height="7" stroke="#333333"><path d="M0 3.500h7M3.500 0v7" /></svg>
          </button>
        </div>
      </div>
    </footer>
  );
}

export default function App() {
  return (
    <div className={`${UI} flex h-screen flex-col overflow-hidden bg-black py-[17px] pr-px`}>
      <Header />
      <div className="flex h-[82px] shrink-0 border-y border-[#b9bdc4] bg-linear-to-b from-white from-50% to-[#e9ebf0]">
        <Group title="Portapapeles" className="w-[147px]"><Clipboard /></Group>
        <Group title="Fuente" className="w-[252px]"><FontGroup /></Group>
        <Group title="Párrafo" className="w-[215px]"><ParagraphGroup /></Group>
        <Group title="Estilos" className="min-w-0 flex-1"><StylesGroup /></Group>
        <Group title="Edición" className="mr-[23px] w-[96px]" launcher={false}><EditGroup /></Group>
      </div>
      <div className="h-1 shrink-0 bg-[#b9bcc3]" />
      <QuickAccess />
      <HorizontalRuler />
      <Workspace />
      <HorizontalScroll />
      <StatusBar />
    </div>
  );
}
